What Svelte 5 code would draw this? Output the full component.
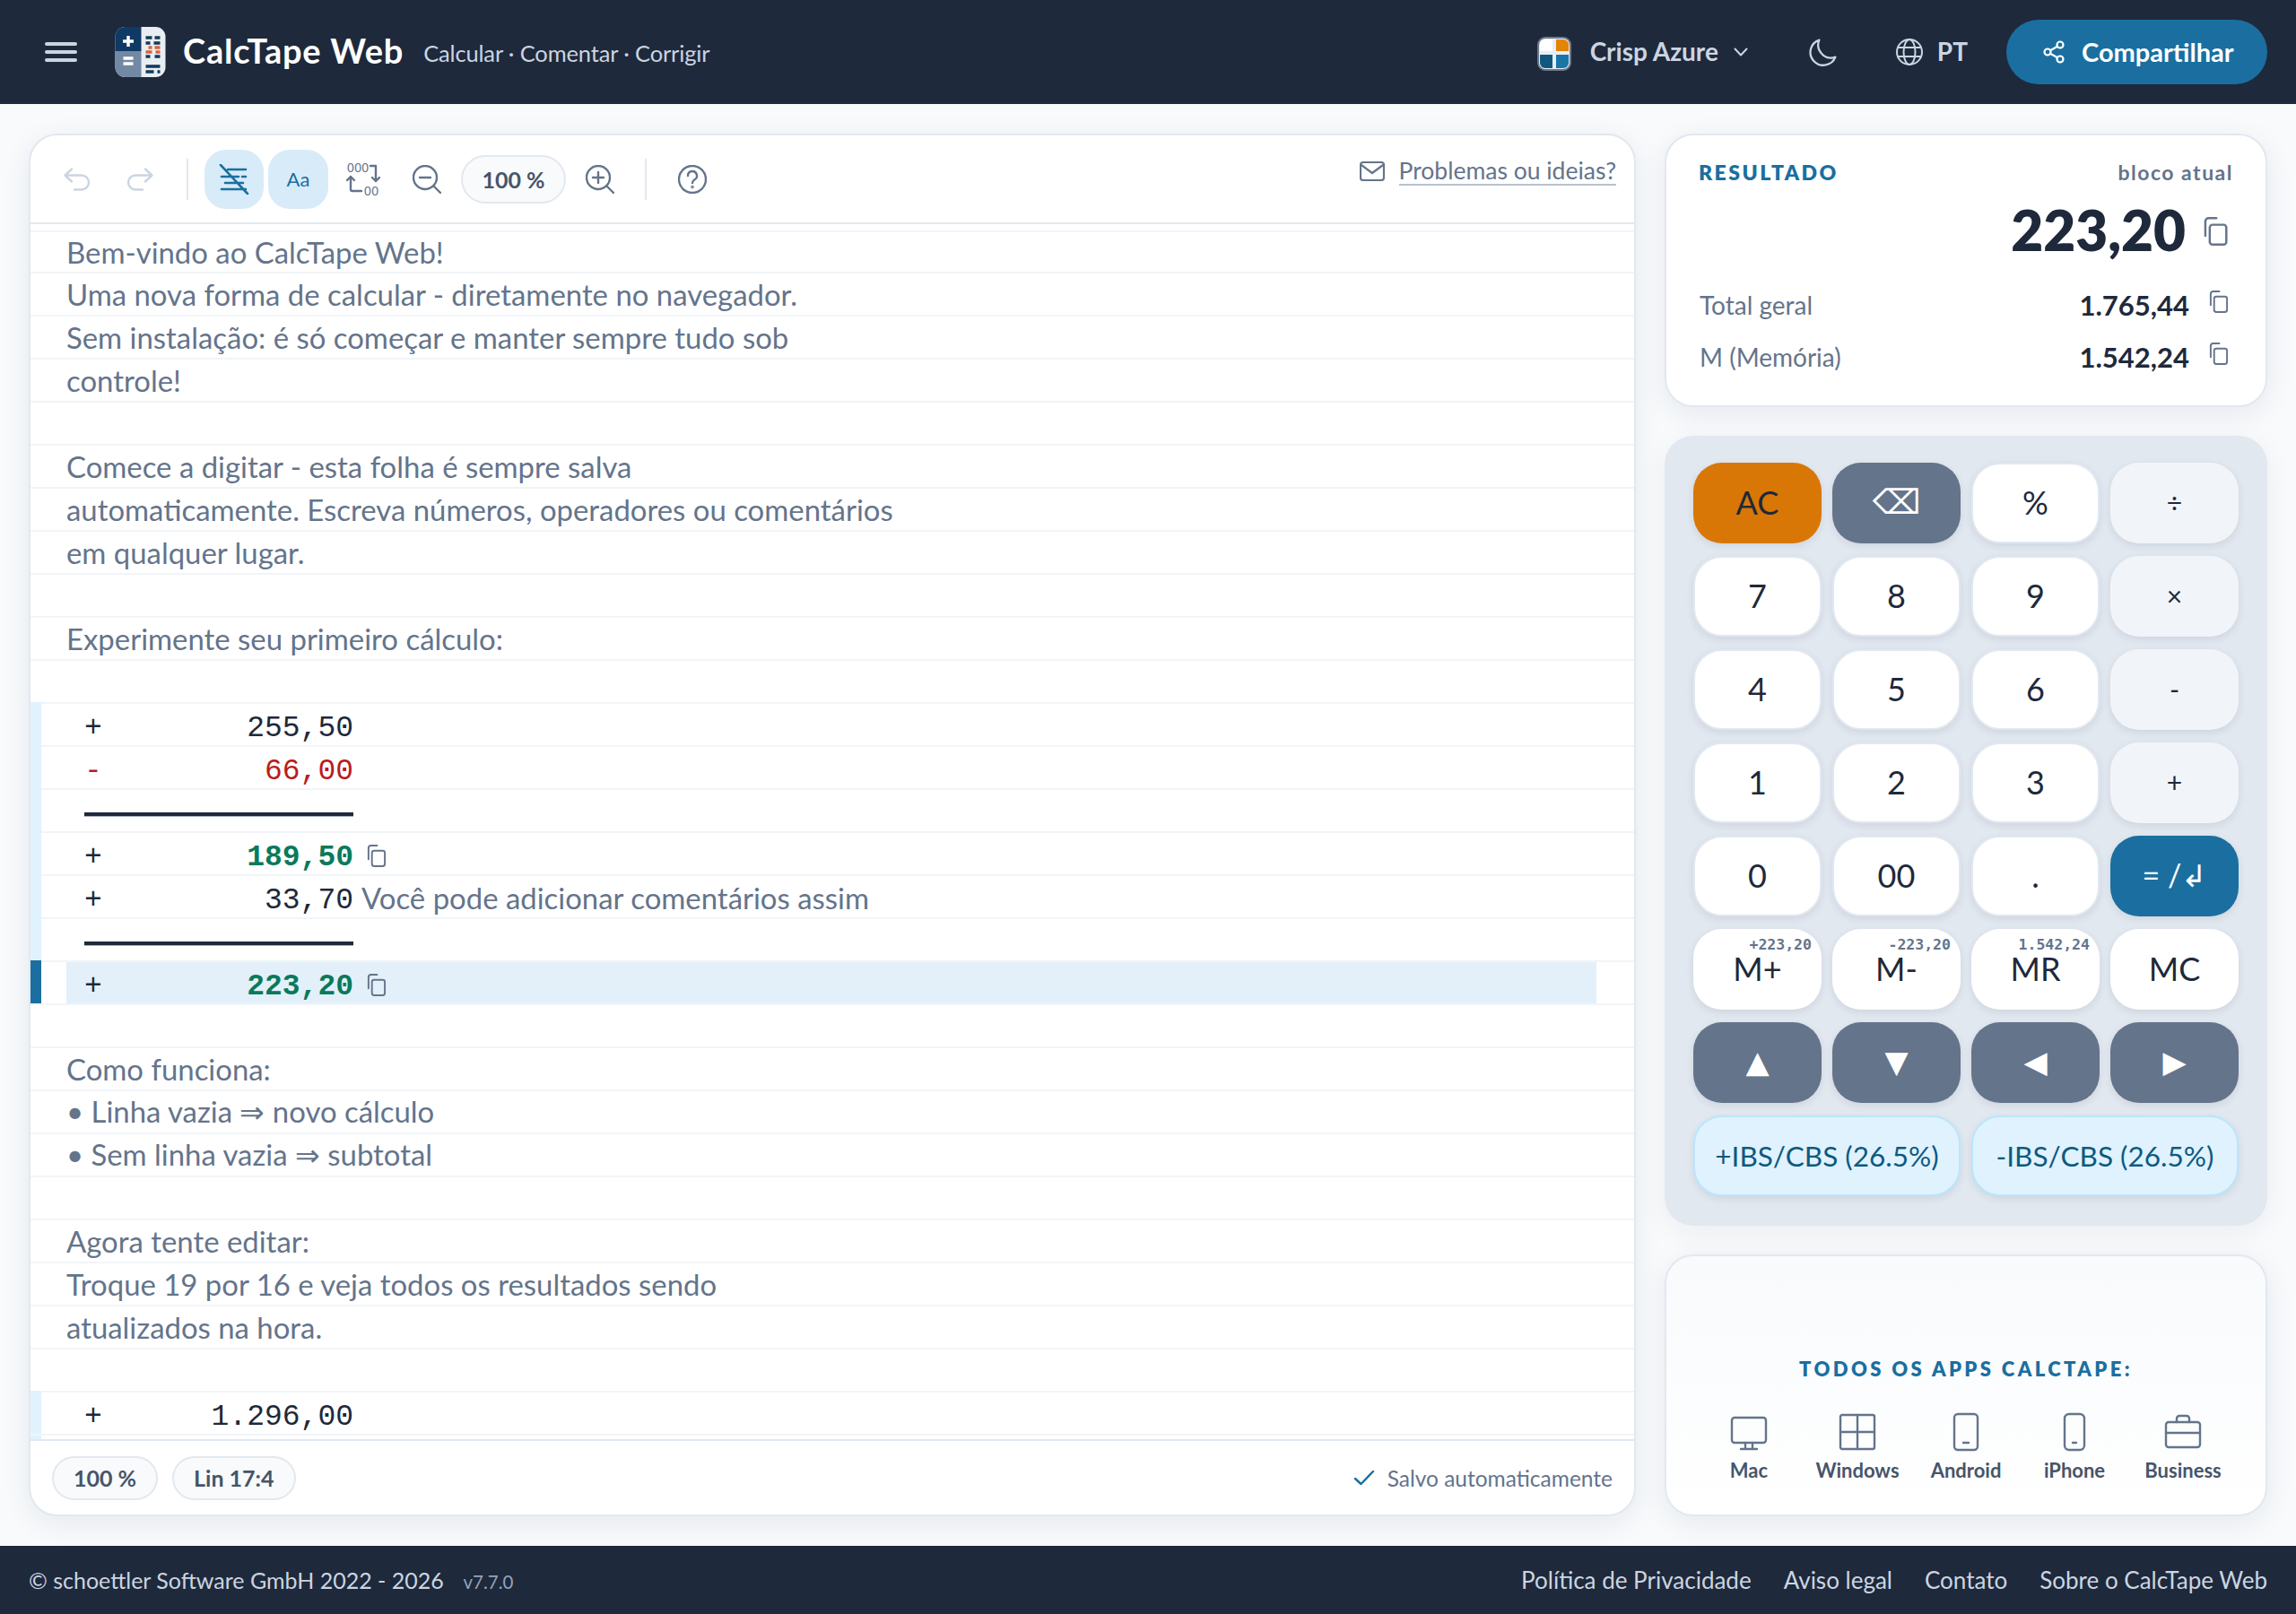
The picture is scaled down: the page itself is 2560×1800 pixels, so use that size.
<script>
    const rows = [
        { text: 'Bem-vindo ao CalcTape Web!' },
        { text: 'Uma nova forma de calcular - diretamente no navegador.' },
        { text: 'Sem instalação: é só começar e manter sempre tudo sob' },
        { text: 'controle!' },
        {},
        { text: 'Comece a digitar - esta folha é sempre salva' },
        { text: 'automaticamente. Escreva números, operadores ou comentários' },
        { text: 'em qualquer lugar.' },
        {},
        { text: 'Experimente seu primeiro cálculo:' },
        {},
        { sign: '+', num: '255,50', block: true },
        { sign: '-', num: '66,00', block: true, minus: true },
        { rule: true, block: true },
        { sign: '+', num: '189,50', block: true, sum: true },
        { sign: '+', num: '33,70', block: true, text: 'Você pode adicionar comentários assim' },
        { rule: true, block: true },
        { sign: '+', num: '223,20', block: true, sum: true, active: true },
        {},
        { text: 'Como funciona:' },
        { text: '• Linha vazia ⇒ novo cálculo' },
        { text: '• Sem linha vazia ⇒ subtotal' },
        {},
        { text: 'Agora tente editar:' },
        { text: 'Troque 19 por 16 e veja todos os resultados sendo' },
        { text: 'atualizados na hora.' },
        {},
        { sign: '+', num: '1.296,00', block: true }
    ];

    const keys = [
        { label: 'AC', kind: 'ac' },
        { label: '⌫', kind: 'dark glyph' },
        { label: '%', kind: 'digit' },
        { label: '÷', kind: 'op' },
        { label: '7', kind: 'digit' },
        { label: '8', kind: 'digit' },
        { label: '9', kind: 'digit' },
        { label: '×', kind: 'op' },
        { label: '4', kind: 'digit' },
        { label: '5', kind: 'digit' },
        { label: '6', kind: 'digit' },
        { label: '-', kind: 'op' },
        { label: '1', kind: 'digit' },
        { label: '2', kind: 'digit' },
        { label: '3', kind: 'digit' },
        { label: '+', kind: 'op' },
        { label: '0', kind: 'digit' },
        { label: '00', kind: 'digit' },
        { label: '.', kind: 'digit' },
        { label: '= /↲', kind: 'equals' },
        { label: 'M+', kind: 'mem', hint: '+223,20' },
        { label: 'M-', kind: 'mem', hint: '-223,20' },
        { label: 'MR', kind: 'mem', hint: '1.542,24' },
        { label: 'MC', kind: 'mem' },
        { label: '▲', kind: 'dark arrow' },
        { label: '▼', kind: 'dark arrow' },
        { label: '◀', kind: 'dark arrow' },
        { label: '▶', kind: 'dark arrow' }
    ];

    const apps = ['Mac', 'Windows', 'Android', 'iPhone', 'Business'];
    const links = ['Política de Privacidade', 'Aviso legal', 'Contato', 'Sobre o CalcTape Web'];
</script>

{#snippet copy(cls)}
    <svg class="copy {cls}" viewBox="0 0 24 26" fill="none" stroke="currentColor" stroke-width="2" stroke-linecap="round" stroke-linejoin="round">
        <rect x="7" y="7" width="15" height="18" rx="2.5" />
        <path d="M3 17V4a3 3 0 0 1 3-3h7" />
    </svg>
{/snippet}

<div class="page">
    <header class="topbar">
        <div class="brand">
            <div class="burger"><span></span><span></span><span></span></div>
            <svg class="logo" viewBox="0 0 56 56">
                <rect width="56" height="56" rx="11" fill="#e9eef3" />
                <path d="M29 0H11A11 11 0 0 0 0 11V27H29Z" fill="#0f3a66" />
                <path d="M0 27H29V56H11A11 11 0 0 1 0 45Z" fill="#7389a3" />
                <path d="M14.500 10V22M8.500 16H20.500M9 35H20M9 41H20" stroke="#fff" stroke-width="3.500" />
                <path d="M34 12h7M44 12h6M34 18h5M43 18h7M34 33h5M44 33h6M34 44h16M34 50h9M47 50h3" stroke="#14395c" stroke-width="3.500" />
                <path d="M37 23h4M44 23h6M34 28h7M45 28h5" stroke="#d9643a" stroke-width="3.500" />
            </svg>
            <span class="title">CalcTape Web</span>
            <span class="tagline">Calcular · Comentar · Corrigir</span>
        </div>
        <div class="actions">
            <div class="theme">
                <svg class="swatch" viewBox="0 0 38 38">
                    <rect x="1" y="1" width="36" height="36" rx="8" fill="#e8eef5" stroke="#6d7887" stroke-width="2" />
                    <path d="M3 16V9a6 6 0 0 1 6-6h8v13Z" fill="#fff" />
                    <path d="M21 3h8a6 6 0 0 1 6 6v7H21Z" fill="#e38405" />
                    <path d="M3 20h14v15H9a6 6 0 0 1-6-6Z" fill="#12577e" />
                    <path d="M21 20h14v9a6 6 0 0 1-6 6h-8Z" fill="#1a76a8" />
                </svg>
                <span>Crisp Azure</span>
                <svg class="chev" viewBox="0 0 16 10" fill="none" stroke="currentColor" stroke-width="2" stroke-linecap="round" stroke-linejoin="round"><path d="M1.500 1.500 8 8.500l6.500-7" /></svg>
            </div>
            <svg class="moon" viewBox="0 0 30 30" fill="none" stroke="currentColor" stroke-width="2.200" stroke-linecap="round" stroke-linejoin="round"><path d="M11 1.500A14 14 0 0 0 28.500 20 14 14 0 1 1 11 1.500Z" /></svg>
            <div class="lang">
                <svg class="globe" viewBox="0 0 30 30" fill="none" stroke="currentColor" stroke-width="2"><circle cx="15" cy="15" r="14" /><ellipse cx="15" cy="15" rx="6.500" ry="14" /><path d="M2 10h26M2 20h26" /></svg>
                <span>PT</span>
            </div>
            <div class="share">
                <svg viewBox="0 0 26 26" fill="none" stroke="currentColor" stroke-width="2.200"><circle cx="20" cy="5" r="3.500" /><circle cx="6" cy="13" r="3.500" /><circle cx="20" cy="21" r="3.500" /><path d="M9 11.300 17 6.700M9 14.700l8 4.600" /></svg>
                <span>Compartilhar</span>
            </div>
        </div>
    </header>

    <main class="content">
        <section class="editor card">
            <div class="toolbar">
                <svg class="tool faint" viewBox="0 0 30 26" fill="none" stroke="currentColor" stroke-width="2.400" stroke-linecap="round" stroke-linejoin="round"><path d="M9 1.500 1.500 8.500 9 15.500M1.500 8.500H20a8 8 0 0 1 8 8v0a8 8 0 0 1-8 8h-8" /></svg>
                <svg class="tool faint" viewBox="0 0 30 26" fill="none" stroke="currentColor" stroke-width="2.400" stroke-linecap="round" stroke-linejoin="round"><path d="M21 1.500 28.500 8.500 21 15.500M28.500 8.500H10a8 8 0 0 0-8 8v0a8 8 0 0 0 8 8h8" /></svg>
                <div class="divider"></div>
                <div class="toggle">
                    <svg viewBox="0 0 34 34" fill="none" stroke="currentColor" stroke-width="2.600" stroke-linecap="round"><path d="M10 6h20M3 14h19M26 14h4M7 21h20M3 28h27M2 1l30 32" /></svg>
                </div>
                <div class="toggle wide">Aa</div>
                <svg class="tool swap" viewBox="-2 -4 40 44" fill="none" stroke="currentColor" stroke-width="2.400" stroke-linecap="round" stroke-linejoin="round">
                    <text x="0" y="10" class="zeros">000</text>
                    <text x="19" y="36" class="zeros">00</text>
                    <path d="M26 3h6v17M28 16l4 4 4-4M4 15v14a2 2 0 0 0 2 2h10M0 19l4-4 4 4" />
                </svg>
                <svg class="tool zoom" viewBox="0 0 32 32" fill="none" stroke="currentColor" stroke-width="2.400" stroke-linecap="round"><circle cx="14" cy="14" r="13" /><path d="M8 14h12M24 24l7 7" /></svg>
                <div class="pill zoom-level">100 %</div>
                <svg class="tool zoom" viewBox="0 0 32 32" fill="none" stroke="currentColor" stroke-width="2.400" stroke-linecap="round"><circle cx="14" cy="14" r="13" /><path d="M8 14h12M14 8v12M24 24l7 7" /></svg>
                <div class="divider"></div>
                <svg class="tool help" viewBox="0 0 32 32" fill="none" stroke="currentColor" stroke-width="2.400" stroke-linecap="round"><circle cx="16" cy="16" r="15" /><path d="M11 12a5 5 0 1 1 7.500 4.300c-1.600 1-2.500 1.900-2.500 3.700" /><circle cx="16" cy="24.500" r=".6" /></svg>
                <div class="feedback">
                    <svg viewBox="0 0 28 22" fill="none" stroke="currentColor" stroke-width="2.200" stroke-linejoin="round"><rect x="1" y="1" width="26" height="20" rx="3" /><path d="m2 4 12 9 12-9" /></svg>
                    <span>Problemas ou ideias?</span>
                </div>
            </div>

            <div class="sheet">
                {#each rows as row}
                    <div class="row" class:active={row.active}>
                        <div class="gutter" class:block={row.block}></div>
                        <div class="line">
                            {#if row.rule}
                                <div class="rule"></div>
                            {:else if row.num}
                                <span class="sign" class:minus={row.minus}>{row.sign}</span>
                                <span class="num" class:minus={row.minus} class:sum={row.sum}>{row.num}</span>
                                {#if row.sum}
                                    {@render copy('small')}
                                {/if}
                                {#if row.text}
                                    <span class="comment">{row.text}</span>
                                {/if}
                            {:else if row.text}
                                <span class="plain">{row.text}</span>
                            {/if}
                        </div>
                    </div>
                {/each}
                <div class="tail"></div>
            </div>

            <div class="status">
                <div class="pill">100 %</div>
                <div class="pill">Lin 17:4</div>
                <div class="saved">
                    <svg viewBox="0 0 24 18" fill="none" stroke="currentColor" stroke-width="2.400" stroke-linecap="round" stroke-linejoin="round"><path d="m2 10 6.500 6L22 2" /></svg>
                    <span>Salvo automaticamente</span>
                </div>
            </div>
        </section>

        <aside class="side">
            <section class="result card">
                <div class="result-head">
                    <span class="caption">RESULTADO</span>
                    <span class="scope">bloco atual</span>
                </div>
                <div class="big">
                    <span>223,20</span>
                    {@render copy('large')}
                </div>
                <div class="total">
                    <span>Total geral</span>
                    <b>1.765,44</b>
                    {@render copy('medium')}
                </div>
                <div class="total">
                    <span>M (Memória)</span>
                    <b>1.542,24</b>
                    {@render copy('medium')}
                </div>
            </section>

            <section class="keypad">
                {#each keys as key}
                    <div class="key {key.kind}">
                        {#if key.hint}<span class="hint">{key.hint}</span>{/if}
                        <span class="cap">{key.label}</span>
                    </div>
                {/each}
                <div class="tax">+IBS/CBS (26.5%)</div>
                <div class="tax">-IBS/CBS (26.5%)</div>
            </section>

            <section class="apps card">
                <div class="apps-title">TODOS OS APPS CALCTAPE:</div>
                <div class="app-list">
                    {#each apps as app}
                        <div class="app">
                            <svg viewBox="0 0 44 44" fill="none" stroke="currentColor" stroke-width="2.400" stroke-linecap="round" stroke-linejoin="round">
                                {#if app === 'Mac'}
                                    <rect x="3" y="6" width="38" height="28" rx="3" /><path d="M18 34v7M26 34v7M13 41h18" />
                                {:else if app === 'Windows'}
                                    <rect x="3" y="3" width="38" height="38" rx="2" /><path d="M22 3v38M3 22h38" />
                                {:else if app === 'Android'}
                                    <rect x="9" y="2" width="26" height="40" rx="4" /><path d="M19 34h6" />
                                {:else if app === 'iPhone'}
                                    <rect x="11" y="2" width="22" height="40" rx="5" /><path d="M20 34h4" />
                                {:else}
                                    <rect x="3" y="11" width="38" height="28" rx="3" /><path d="M15 11V7a3 3 0 0 1 3-3h8a3 3 0 0 1 3 3v4M3 23h38" />
                                {/if}
                            </svg>
                            <span>{app}</span>
                        </div>
                    {/each}
                </div>
            </section>
        </aside>
    </main>

    <footer class="bottom">
        <div class="copyright">
            <span>© schoettler Software GmbH 2022 - 2026</span>
            <small>v7.7.0</small>
        </div>
        <nav>
            {#each links as link}
                <span>{link}</span>
            {/each}
        </nav>
    </footer>
</div>

<style>
    :global(body) {
        margin: 0;
        background: #f8fafc;
    }

    .page {
        width: 2560px;
        height: 1800px;
        display: flex;
        flex-direction: column;
        font-family: Lato, "Noto Sans", sans-serif;
        color: #1e293b;
    }

    svg {
        display: block;
        flex: none;
    }

    /* header */
    .topbar {
        height: 116px;
        flex: none;
        background: #1e293b;
        display: flex;
        align-items: center;
        justify-content: space-between;
        padding: 0 32px 0 50px;
    }

    .brand,
    .actions,
    .theme,
    .lang,
    .share {
        display: flex;
        align-items: center;
    }

    .burger {
        width: 36px;
        display: flex;
        flex-direction: column;
        gap: 5px;
        margin-right: 42px;
    }

    .burger span {
        height: 4px;
        border-radius: 2px;
        background: #cbd5e1;
    }

    .logo {
        width: 57px;
        height: 56px;
        margin-right: 19px;
    }

    .title {
        font-size: 38px;
        font-weight: 700;
        letter-spacing: 0.8px;
        color: #fff;
        margin: -5px 22px 0 0;
    }

    .tagline {
        font-size: 25.500px;
        letter-spacing: -0.150px;
        color: #cbd5e1;
        margin-top: 2px;
    }

    .theme {
        color: #cbd5e1;
        font-size: 28px;
        font-weight: 700;
        margin-right: 68px;
    }

    .theme span,
    .lang span {
        margin-top: -2px;
    }

    .swatch {
        width: 38px;
        height: 38px;
        margin: 4px 21px 0 0;
    }

    .chev {
        width: 16px;
        height: 10px;
        margin-left: 17px;
    }

    .moon {
        width: 31px;
        height: 31px;
        color: #cbd5e1;
        margin-right: 66px;
    }

    .lang {
        color: #cbd5e1;
        font-size: 28px;
        font-weight: 700;
        margin-right: 43px;
    }

    .globe {
        width: 30px;
        height: 30px;
        margin-right: 16px;
    }

    .share {
        width: 291px;
        height: 72px;
        box-sizing: border-box;
        padding-left: 40px;
        border-radius: 36px;
        background: #1a6fa0;
        color: #fff;
        font-size: 29px;
        font-weight: 700;
    }

    .share span {
        margin-top: -2px;
    }

    .share svg {
        width: 26px;
        height: 26px;
        margin-right: 18px;
    }

    /* layout */
    .content {
        flex: 1;
        min-height: 0;
        display: grid;
        grid-template-columns: 1fr 672px;
        gap: 32px;
        padding: 33px 32px;
    }

    .card {
        box-sizing: border-box;
        background: #fff;
        border: 2px solid #e2e8f0;
        border-radius: 32px;
        box-shadow: 0 8px 32px rgba(30, 41, 59, 0.08);
    }

    .editor {
        display: flex;
        flex-direction: column;
        overflow: hidden;
        min-height: 0;
    }

    .toolbar {
        height: 97px;
        flex: none;
        display: flex;
        align-items: center;
        padding: 0 20px 0 37px;
        border-bottom: 2px solid #e2e8f0;
        color: #64748b;
    }

    .tool {
        width: 30px;
        height: 26px;
    }

    .faint {
        color: #cbd5e1;
        margin-right: 40px;
    }

    .faint + .faint {
        margin-right: 37px;
    }

    .divider {
        width: 2px;
        height: 46px;
        background: #e2e8f0;
    }

    .toggle {
        width: 66px;
        height: 66px;
        margin-left: 18px;
        border-radius: 24px;
        background: #d8ebf8;
        color: #1a6fa0;
        display: flex;
        align-items: center;
        justify-content: center;
        font-size: 22px;
    }

    .toggle svg {
        width: 34px;
        height: 34px;
    }

    .toggle.wide {
        width: 67px;
        margin-left: 5px;
    }

    .swap {
        width: 40px;
        height: 44px;
        margin: 0 35px 0 19px;
    }

    .zeros {
        font-family: "Liberation Sans", sans-serif;
        font-size: 14px;
        fill: currentColor;
        stroke: none;
        letter-spacing: 0.4px;
    }

    .zoom {
        width: 32px;
        height: 32px;
    }

    .pill {
        box-sizing: border-box;
        height: 49px;
        padding: 0 22px;
        display: flex;
        align-items: center;
        border: 2px solid #e2e8f0;
        border-radius: 25px;
        background: #f8fafc;
        color: #475569;
        font-size: 25px;
        font-weight: 700;
    }

    .zoom-level {
        width: 117px;
        height: 54px;
        padding: 0;
        justify-content: center;
        border-radius: 27px;
        margin: 0 22px;
    }

    .zoom-level + .zoom {
        margin-right: 34px;
    }

    .help {
        width: 32px;
        height: 32px;
        margin-left: 35px;
    }

    .feedback {
        margin-left: auto;
        margin-top: -17px;
        display: flex;
        align-items: center;
        gap: 16px;
        font-size: 26.500px;
    }

    .feedback svg {
        width: 28px;
        height: 22px;
    }

    .feedback span {
        border-bottom: 2px solid #b8c2cf;
        line-height: 30px;
    }

    /* sheet */
    .sheet {
        flex: 1;
        min-height: 0;
        padding-top: 7px;
        display: flex;
        flex-direction: column;
        overflow: hidden;
    }

    .row {
        height: 48px;
        flex: none;
        box-sizing: border-box;
        display: flex;
        border-top: 2px solid #f1f5f9;
        margin-bottom: -2px;
    }

    .row + .row {
        height: 50px;
    }

    .gutter {
        width: 12px;
        flex: none;
        margin-top: -2px;
    }

    .gutter.block {
        background: #e0f2fe;
    }

    .active .gutter {
        background: #1a6fa0;
    }

    .line {
        flex: 1;
        display: flex;
        align-items: center;
        padding-left: 28px;
        margin-right: 42px;
        font-size: 32.900px;
        white-space: nowrap;
    }

    .active .line {
        background: #e3f0fa;
        margin-left: 28px;
        padding-left: 0;
    }

    .plain,
    .comment {
        color: #64748b;
    }

    .plain {
        margin-top: -2px;
    }

    .sign,
    .num {
        font-family: "Liberation Mono", monospace;
        font-size: 33px;
        padding-top: 6px;
        color: #1e293b;
    }

    .sign {
        width: 100px;
        margin-left: 20px;
    }

    .num {
        width: 200px;
        text-align: right;
    }

    .sign.minus,
    .num.minus {
        color: #b91c1c;
    }

    .num.sum {
        color: #0a7a5a;
        font-weight: 700;
    }

    .comment {
        margin-left: 9px;
    }

    .rule {
        width: 300px;
        height: 4px;
        margin: 6px 0 0 20px;
        background: #1e293b;
        border-bottom: 1px solid #aab2bd;
    }

    .copy {
        color: #64748b;
    }

    .copy.small {
        width: 23px;
        height: 25px;
        margin: 2px 0 0 14px;
    }

    .tail {
        flex: 1;
        border-top: 2px solid #f1f5f9;
        background: linear-gradient(90deg, #e0f2fe 12px, transparent 12px);
    }

    .status {
        height: 84px;
        flex: none;
        box-sizing: border-box;
        display: flex;
        align-items: center;
        gap: 16px;
        padding: 0 24px 0 24px;
        border-top: 2px solid #e2e8f0;
    }

    .saved {
        margin-left: auto;
        display: flex;
        align-items: center;
        gap: 14px;
        color: #64748b;
        font-size: 24.500px;
    }

    .saved svg {
        width: 24px;
        height: 18px;
        color: #1a6fa0;
    }

    /* right column */
    .side {
        display: flex;
        flex-direction: column;
        gap: 32px;
        min-height: 0;
    }

    .result {
        height: 305px;
        flex: none;
        padding: 27px 36px 0 36px;
    }

    .result-head {
        display: flex;
        justify-content: space-between;
        align-items: center;
    }

    .caption {
        color: #1a6fa0;
        font-size: 23px;
        font-weight: 800;
        letter-spacing: 2.500px;
    }

    .scope {
        color: #64748b;
        font-size: 23px;
        font-weight: 700;
        letter-spacing: 1.500px;
    }

    .big {
        display: flex;
        justify-content: flex-end;
        align-items: center;
        gap: 17px;
        font-size: 62px;
        font-weight: 800;
        margin-top: 13px;
        padding-right: 4px;
    }

    .copy.large {
        width: 32px;
        height: 32px;
        margin-top: 4px;
    }

    .total {
        display: flex;
        align-items: center;
        height: 58px;
        padding-left: 1px;
        color: #64748b;
        font-size: 28px;
    }

    .big + .total {
        margin-top: 18px;
    }

    .total b {
        margin-left: auto;
        font-size: 31px;
        color: #1e293b;
    }

    .copy.medium {
        width: 23px;
        height: 25px;
        margin: -8px 5px 0 21px;
    }

    .keypad {
        height: 881px;
        flex: none;
        box-sizing: border-box;
        padding: 30px 32px;
        background: #e2e8f0;
        border-radius: 32px;
        box-shadow: 0 8px 32px rgba(30, 41, 59, 0.06);
        display: grid;
        grid-template-columns: repeat(8, minmax(0, 1fr));
        grid-auto-rows: 90px;
        gap: 14px 12px;
    }

    .key {
        grid-column: span 2;
        position: relative;
        box-sizing: border-box;
        display: flex;
        align-items: center;
        justify-content: center;
        border-radius: 32px;
        font-size: 36px;
        color: #1e293b;
        background: #fff;
        box-shadow: 0 3px 8px rgba(30, 41, 59, 0.1);
    }

    .cap {
        margin-top: -2px;
    }

    .key.digit {
        border: 2px solid #e2e8f0;
    }

    .key.op {
        background: #f1f5f9;
        font-size: 30px;
    }

    .key.ac {
        background: #d97706;
    }

    .key.dark {
        background: #64748b;
        color: #fff;
    }

    .key.glyph {
        font-family: "DejaVu Sans", sans-serif;
        font-size: 38px;
    }

    .key.arrow {
        font-family: "DejaVu Sans", sans-serif;
        font-size: 34px;
    }

    .key.equals {
        background: #1a6fa0;
        color: #fff;
        font-size: 34px;
    }

    .hint {
        position: absolute;
        top: 8px;
        right: 11px;
        font-family: "DejaVu Sans Mono", monospace;
        font-size: 16.500px;
        font-weight: 700;
        color: #64748b;
    }

    .tax {
        grid-column: span 4;
        box-sizing: border-box;
        display: flex;
        align-items: center;
        justify-content: center;
        border: 2px solid #bae6fd;
        border-radius: 32px;
        background: #e0f2fe;
        color: #0c5a82;
        font-size: 31.500px;
        white-space: nowrap;
        box-shadow: 0 3px 8px rgba(30, 41, 59, 0.1);
    }

    .apps {
        flex: 1;
        min-height: 0;
        display: flex;
        flex-direction: column;
        align-items: center;
        justify-content: flex-end;
        padding-bottom: 36px;
        background: linear-gradient(#f8fafc, #fff);
    }

    .apps-title {
        color: #1a6fa0;
        font-size: 22px;
        font-weight: 800;
        letter-spacing: 3.400px;
        margin-bottom: 35px;
    }

    .app-list {
        width: 605px;
        display: grid;
        grid-template-columns: repeat(5, 1fr);
    }

    .app {
        display: flex;
        flex-direction: column;
        align-items: center;
        gap: 7px;
        font-size: 22px;
        font-weight: 700;
        color: #475569;
    }

    .app svg {
        width: 44px;
        height: 44px;
        color: #64748b;
    }

    /* footer */
    .bottom {
        height: 76px;
        flex: none;
        background: #1e293b;
        color: #cbd5e1;
        font-size: 26px;
        display: flex;
        align-items: center;
        justify-content: space-between;
        padding: 0 32px;
    }

    .copyright span {
        font-size: 25px;
    }

    .copyright small {
        font-size: 20.500px;
        color: #94a3b8;
        margin-left: 15px;
    }

    nav {
        display: flex;
        gap: 36px;
    }
</style>
